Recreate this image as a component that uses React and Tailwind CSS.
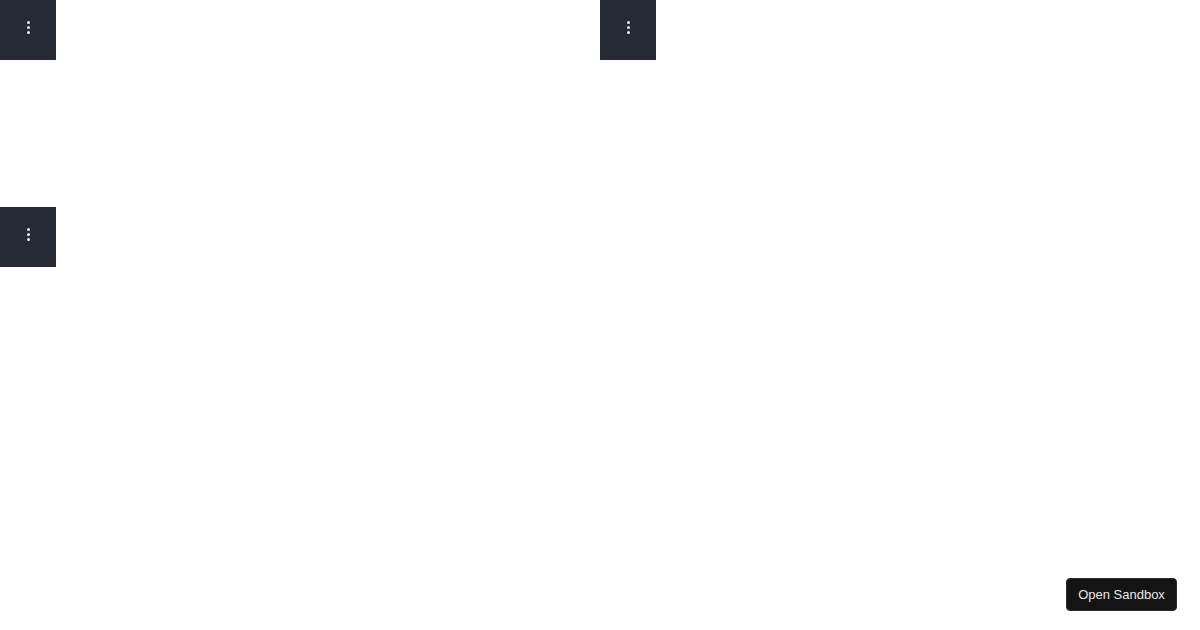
import React from 'react'

function MenuTile() {
  return (
    <button className="w-14 h-[60px] pb-[5px] bg-[#252a35] flex flex-col items-center justify-center gap-[2px]">
      <span className="block w-[3px] h-[3px] rounded-full bg-[#e6eef5]"></span>
      <span className="block w-[3px] h-[3px] rounded-full bg-[#e6eef5]"></span>
      <span className="block w-[3px] h-[3px] rounded-full bg-[#e6eef5]"></span>
    </button>
  )
}

export default function App() {
  return (
    <div className="w-full h-[630px] bg-white" style={{ fontFamily: '"Liberation Sans", Arial, sans-serif' }}>
      <div className="grid grid-cols-2">
        <div className="h-[207px]">
          <MenuTile />
        </div>
        <div className="h-[207px]">
          <MenuTile />
        </div>
        <div>
          <MenuTile />
        </div>
      </div>

      <button className="fixed right-[23px] bottom-[19px] w-[111px] h-[33px] rounded-[4px] bg-[#141414] border border-[#2c2c2c] text-[#e8e8e8] text-[13px] flex items-center justify-center">
        Open Sandbox
      </button>
    </div>
  )
}
